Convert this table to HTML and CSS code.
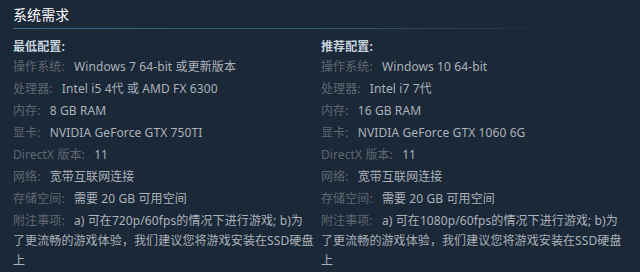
FILE: index.html
```html
<!DOCTYPE html>
<html lang="zh-CN">
<head>
<meta charset="utf-8">
<link rel="stylesheet" href="styles.css">
</head>
<body>
<div class="sysreq">
  <h2 class="sysreq-title">系统需求</h2>
  <div class="cols">
    <div class="col">
      <div class="col-title">最低配置:</div>
      <ul class="req-list">
        <li><span class="lbl">操作系统:</span> Windows 7 64-bit 或更新版本</li>
        <li><span class="lbl">处理器:</span> Intel i5 4代 或 AMD FX 6300</li>
        <li><span class="lbl">内存:</span> 8 GB RAM</li>
        <li><span class="lbl">显卡:</span> NVIDIA GeForce GTX 750TI</li>
        <li><span class="lbl">DirectX 版本:</span> 11</li>
        <li><span class="lbl">网络:</span> 宽带互联网连接</li>
        <li><span class="lbl">存储空间:</span> 需要 20 GB 可用空间</li>
        <li><span class="lbl">附注事项:</span> a) 可在720p/60fps的情况下进行游戏; b)为了更流畅的游戏体验，我们建议您将游戏安装在SSD硬盘上</li>
      </ul>
    </div>
    <div class="col">
      <div class="col-title">推荐配置:</div>
      <ul class="req-list">
        <li><span class="lbl">操作系统:</span> Windows 10 64-bit</li>
        <li><span class="lbl">处理器:</span> Intel i7 7代</li>
        <li><span class="lbl">内存:</span> 16 GB RAM</li>
        <li><span class="lbl">显卡:</span> NVIDIA GeForce GTX 1060 6G</li>
        <li><span class="lbl">DirectX 版本:</span> 11</li>
        <li><span class="lbl">网络:</span> 宽带互联网连接</li>
        <li><span class="lbl">存储空间:</span> 需要 20 GB 可用空间</li>
        <li><span class="lbl">附注事项:</span> a) 可在1080p/60fps的情况下进行游戏; b)为了更流畅的游戏体验，我们建议您将游戏安装在SSD硬盘上</li>
      </ul>
    </div>
  </div>
</div>
</body>
</html>
```
FILE: styles.css
```css
html, body {
  margin: 0;
  padding: 0;
  background: #1b2838;
}
body {
  width: 640px;
  height: 272px;
  overflow: hidden;
  font-family: "Noto Sans", "Noto Sans CJK SC", sans-serif;
  font-size: 12px;
  letter-spacing: 0.1px;
  color: #acb2b8;
}
.sysreq {
  padding: 0 13px;
}
.sysreq-title {
  margin: 0;
  padding: 5px 0 3px;
  font-size: 14px;
  line-height: 20px;
  font-weight: normal;
  color: #ffffff;
  border-bottom: 1px solid transparent;
  border-image: linear-gradient(to right, #3d6b89 0%, #2e4e66 70%, rgba(46,78,102,0) 100%) 1;
  width: 547px;
}
.cols {
  display: grid;
  grid-template-columns: 302px 302px;
  column-gap: 6px;
  padding-top: 8px;
}
.col-title {
  line-height: 20px;
  color: #c6d4df;
  font-weight: bold;
}
.req-list {
  list-style: none;
  margin: 0;
  padding: 0;
}
.req-list li {
  line-height: 20px;
  margin-bottom: 2px;
}
.lbl {
  color: #5f6770;
  margin-right: 6px;
}
```
